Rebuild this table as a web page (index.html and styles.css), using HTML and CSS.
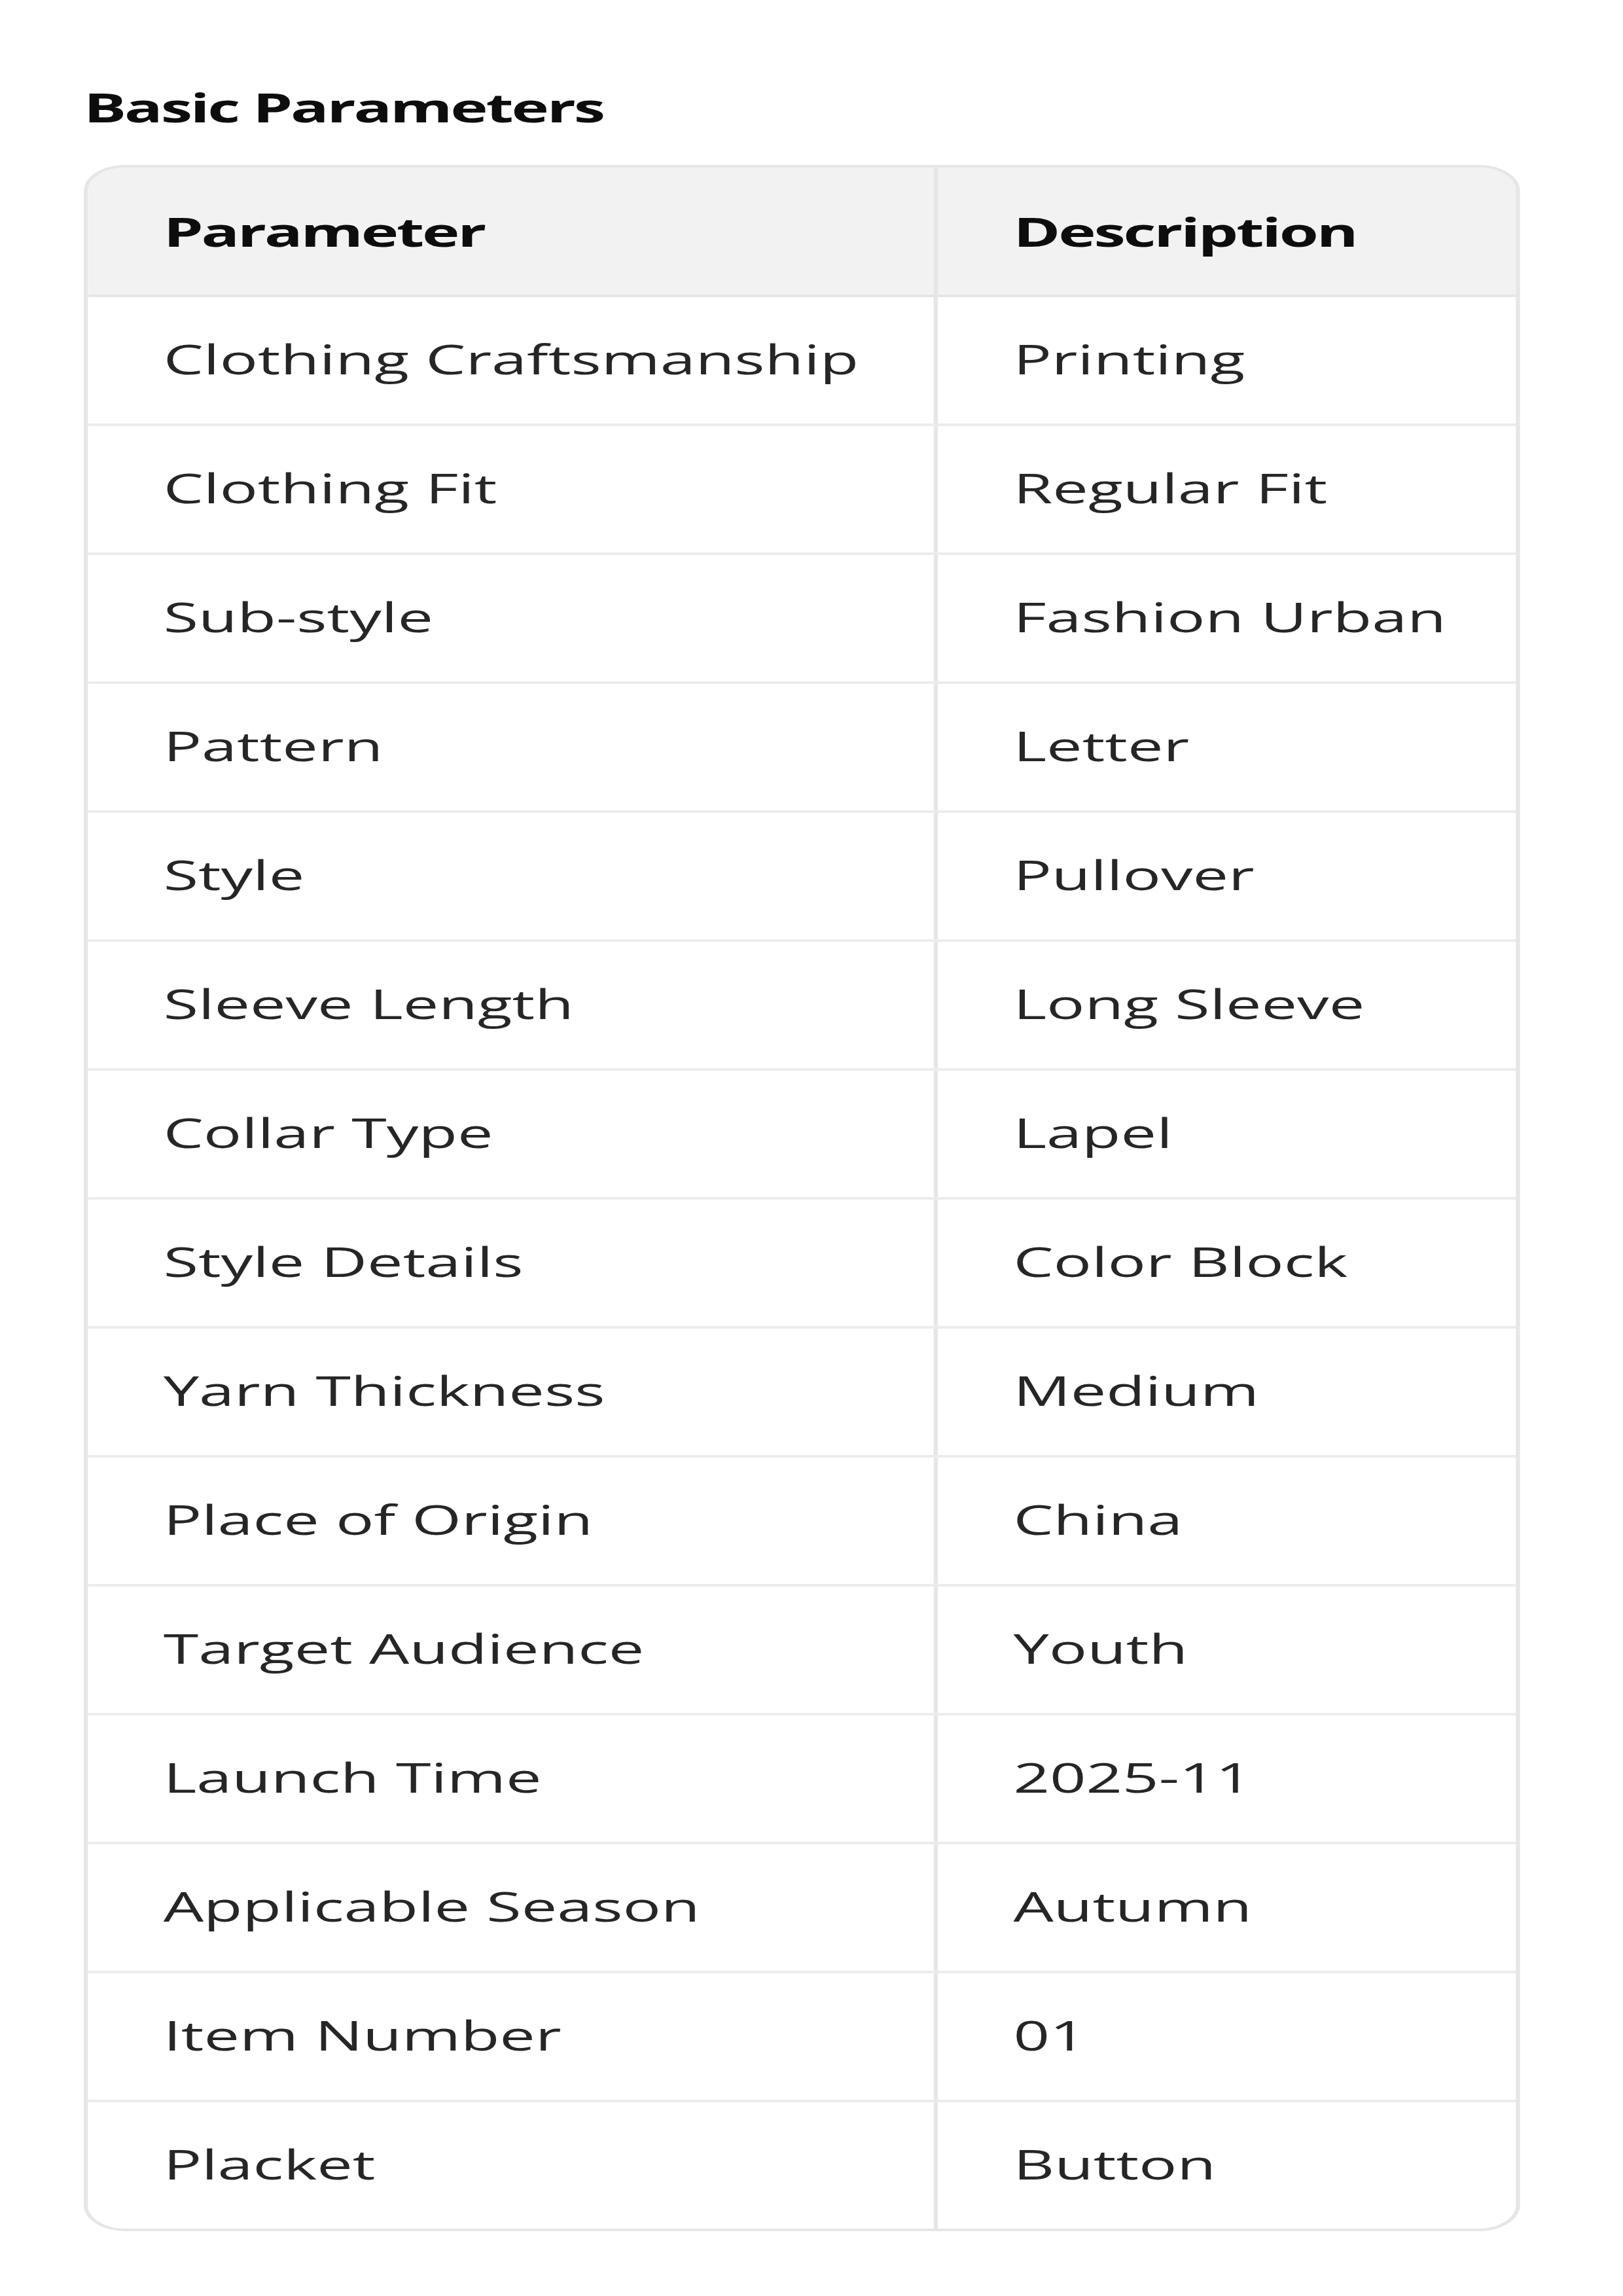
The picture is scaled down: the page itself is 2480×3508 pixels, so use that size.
FILE: index.html
```html
<!DOCTYPE html>
<html lang="en">
<head>
<meta charset="utf-8">
<title>Basic Parameters</title>
<link rel="stylesheet" href="styles.css">
</head>
<body>
<main class="page">
  <h2 class="title">Basic Parameters</h2>
  <div class="table-wrap">
    <table class="params">
      <thead>
        <tr><th>Parameter</th><th>Description</th></tr>
      </thead>
      <tbody>
        <tr><td>Clothing Craftsmanship</td><td>Printing</td></tr>
        <tr><td>Clothing Fit</td><td>Regular Fit</td></tr>
        <tr><td>Sub-style</td><td>Fashion Urban</td></tr>
        <tr><td>Pattern</td><td>Letter</td></tr>
        <tr><td>Style</td><td>Pullover</td></tr>
        <tr><td>Sleeve Length</td><td>Long Sleeve</td></tr>
        <tr><td>Collar Type</td><td>Lapel</td></tr>
        <tr><td>Style Details</td><td>Color Block</td></tr>
        <tr><td>Yarn Thickness</td><td>Medium</td></tr>
        <tr><td>Place of Origin</td><td>China</td></tr>
        <tr><td>Target Audience</td><td>Youth</td></tr>
        <tr><td>Launch Time</td><td>2025-11</td></tr>
        <tr><td>Applicable Season</td><td>Autumn</td></tr>
        <tr><td>Item Number</td><td>01</td></tr>
        <tr><td>Placket</td><td>Button</td></tr>
      </tbody>
    </table>
  </div>
</main>
</body>
</html>
```
FILE: styles.css
```css
html, body {
  margin: 0;
  padding: 0;
  background: #ffffff;
}

body {
  font-family: "Open Sans", "Noto Sans", "DejaVu Sans", sans-serif;
  font-size: 61.5px;
  line-height: 74px;
  color: #262626;
}

/* The reference is a horizontally stretched capture: lay out at 1570px and widen it */
.page {
  width: 1570px;
  box-sizing: border-box;
  padding: 126px 0 0 81px;
  transform: scaleX(1.58);
  transform-origin: 0 0;
}

.title {
  margin: 0 0 52px 0;
  font-size: 61.5px;
  line-height: 74px;
  font-weight: 700;
  letter-spacing: -2px;
  color: #0d0d0d;
}

.table-wrap {
  width: 1389px;
  border: 4px solid #e6e6e6;
  border-radius: 40px;
  overflow: hidden;
  box-sizing: border-box;
}

.params {
  width: 100%;
  border-collapse: collapse;
  table-layout: fixed;
}

.params th,
.params td {
  box-sizing: border-box;
  text-align: left;
  padding: 57px 0 62px 73px;
  border-bottom: 4px solid #ececec;
  white-space: nowrap;
}

.params th:first-child,
.params td:first-child {
  width: 820px;
}

.params th + th,
.params td + td {
  border-left: 4px solid #e6e6e6;
}

.params thead th {
  background: #f2f2f2;
  font-weight: 700;
  letter-spacing: -2px;
  color: #0d0d0d;
  padding: 60px 0 60px 73px;
  border-bottom-color: #e6e6e6;
}

.params tbody tr:last-child td {
  border-bottom: none;
}
```
